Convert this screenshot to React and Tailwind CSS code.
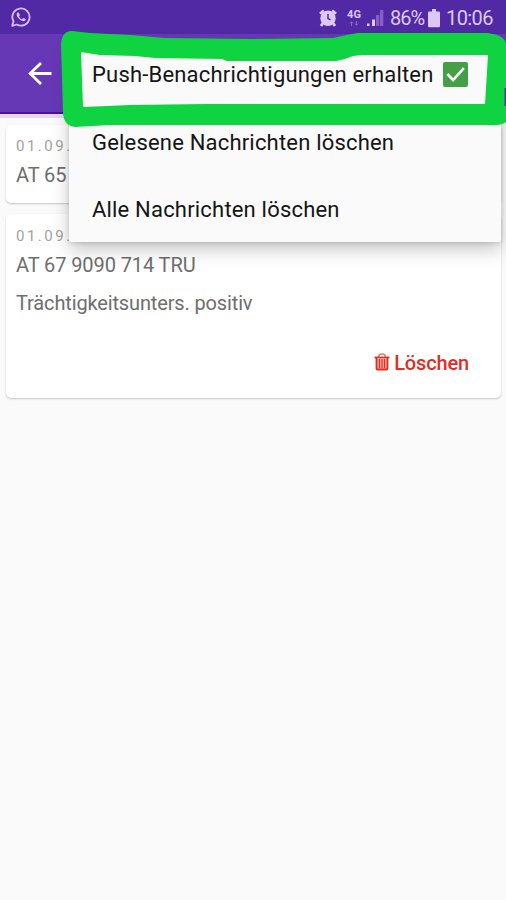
function WhatsAppIcon() {
  return (
    <svg className="mt-[7px] h-5 w-5" viewBox="0 0 20 20" fill="none">
      <path d="M1.2 18.8 2.5 14.3A8.6 8.6 0 1 1 5.7 17.5Z" stroke="#e0b8f4" strokeWidth="1.8" strokeLinejoin="round" />
      <path d="M7.1 5.2c-.6 0-1.5.8-1.5 2.1 0 3.1 4.2 6.9 7 6.9 1.200 0 2.200-.9 2.200-1.700 0-.5-2-1.500-2.400-1.500-.5 0-.9 1.200-1.400 1.200-.7 0-2.900-1.900-2.900-2.700 0-.4.7-.8.7-1.300 0-.5-.7-3-1.700-3Z" fill="#e0b8f4" />
    </svg>
  );
}

function AlarmIcon() {
  return (
    <svg className="h-[18px] w-[18px]" viewBox="0 0 18 18" fill="none">
      <path d="M1 4.800 4.800 1.500M13.200 1.500 17 4.800M4 14 2 17M14 14 16 17" stroke="#dcc9f3" strokeWidth="2.800" />
      <circle cx="9" cy="9.200" r="7.700" fill="#dcc9f3" />
      <path d="M9 5V9.600L11.500 10.800" stroke="#5229a5" strokeWidth="1.500" />
    </svg>
  );
}

function SignalIcon() {
  return (
    <svg className="h-[18px] w-[17px]" viewBox="0 0 17 18">
      <path d="M0 14.500h2.500v2.500H0ZM5 10.500h3V17H5Z" fill="#dcc9f3" />
      <path d="M9 6h3.300v11H9ZM13 1h3.300v16H13Z" fill="#8560c2" />
    </svg>
  );
}

function StatusBar() {
  return (
    <header className="flex h-[34px] bg-[#5229a5] pl-[11px] text-[#dcc9f3]">
      <WhatsAppIcon />
      <div className="ml-auto flex h-[36px] w-[187px] shrink-0 items-center">
        <AlarmIcon />
        <div className="ml-[9px] flex w-[16px] flex-col items-center text-[11px] leading-[10px] font-bold">
          <span>4G</span>
          <svg className="mt-[1px] h-[5px] w-[10px]" viewBox="0 0 10 5" fill="none" stroke="#8d6ac6">
            <path d="M2.500 5V.8M1 2.300 2.500.8 4 2.300M7.500 0v4.200M6 2.700 7.500 4.200 9 2.700" />
          </svg>
        </div>
        <div className="ml-[5px]"><SignalIcon /></div>
        <span className="ml-[6px] w-[38px] text-[20px] tracking-[-1px]">86%</span>
        <svg className="ml-0 h-[19px] w-[12px]" viewBox="0 0 12 19">
          <path d="M4 0h4v2.500h3q1 0 1 1V17q0 1.200-1 1.200H1Q0 18.200 0 17V3.500q0-1 1-1h3Z" fill="#dcc9f3" />
        </svg>
        <span className="ml-[6px] text-[20px] tracking-[-0.600px]">10:06</span>
      </div>
    </header>
  );
}

function Checkbox() {
  return (
    <svg className="ml-[10px] h-[25px] w-[25px] shrink-0" viewBox="0 0 25 25" fill="none">
      <rect width="25" height="25" rx="2" fill="#43a047" />
      <path d="m4.300 12 5.800 6L20.800 6.200" stroke="white" strokeWidth="2.600" />
    </svg>
  );
}

function Menu() {
  return (
    <div className="absolute top-[41px] left-[69px] flex h-[201px] w-[432px] flex-col rounded-[2px] bg-[#fafafa] pl-[23px] text-[22px] tracking-[0.190px] text-[#151515] shadow-[0_8px_18px_rgba(0,0,0,0.22),0_1px_4px_rgba(0,0,0,0.14)]">
      <div className="flex h-[67px] shrink-0 items-center whitespace-nowrap">
        <span className="w-[341px]">Push-Benachrichtigungen erhalten</span>
        <Checkbox />
      </div>
      <div className="flex h-[67px] shrink-0 items-center pt-[2px]">Gelesene Nachrichten löschen</div>
      <div className="flex h-[67px] shrink-0 items-center pt-[2px]">Alle Nachrichten löschen</div>
    </div>
  );
}

function Highlight() {
  return (
    <svg className="absolute top-0 left-0 h-[130px] w-[506px]" viewBox="0 0 506 130">
      <path
        fillRule="evenodd"
        fill="#10d342"
        d="M61 44Q62 31 72 31L90 33 130 35 165 38 253 39 333 38Q345 35 358 33L487 33Q506 35 506 45V122Q500 126 490 125L250 125 110 125 75 127Q64 126 63 113ZM81 52 100 55 135 56 155 58 222 59 227 61 336 61Q344 60 353 56L362 55 488 55 485 104 205 104 130 105 83 107Z"
      />
      <path d="M504.500 88h1.500v18h-1.500Z" fill="#4b3aa0" />
    </svg>
  );
}

function TrashIcon() {
  return (
    <svg className="mb-[3px] h-[18px] w-[16px]" viewBox="0 0 16 18" fill="none" stroke="#dc3025">
      <path d="M4.500 4 5.500 1.500Q6 1 8 1T10.500 1.500L11.500 4" strokeWidth="1.500" stroke="#e8756d" />
      <path d="M.5 4.500h15" strokeWidth="1.800" />
      <path d="M2.500 5v10.500Q2.500 16.500 3.500 16.500h9q1 0 1-1V5" strokeWidth="1.800" fill="#f3a29b" />
      <path d="M5.500 6v9M8 6v9M10.500 6v9" strokeWidth="1.100" />
    </svg>
  );
}

export default function App() {
  return (
    <div className="relative flex h-[900px] w-[506px] flex-col overflow-hidden bg-[#fafafa] font-['Roboto',sans-serif]">
      <StatusBar />
      <div className="flex h-[80px] shrink-0 items-center border-b-2 border-[#4c0fa6] bg-[#6738b6] pl-[28px]">
        <svg className="h-[24px] w-[24px]" viewBox="0 0 24 24" fill="none" stroke="white" strokeWidth="2.800">
          <path d="M23.500 12.500H2M13 2 2.200 12.500 13 23" />
        </svg>
      </div>
      <div className="h-[4px] shrink-0 bg-[#e2d9f0]" />
      <main className="flex flex-col gap-[11px] pr-[5px] pl-[6px] pt-[7px] text-[20px] text-[#6e6e6e]">
        <article className="h-[78px] rounded-[5px] bg-white px-[10px] pt-[10px] shadow-[0_1px_2px_rgba(0,0,0,0.22)]">
          <div className="text-[15px] leading-[22px] tracking-[2.500px] text-[#a2a2a2]">01.09.</div>
          <div className="mt-[5px] leading-[26px] tracking-[-0.100px]">AT 65</div>
        </article>
        <article className="flex h-[184px] flex-col rounded-[5px] bg-white px-[10px] pt-[11px] shadow-[0_1px_2px_rgba(0,0,0,0.22)]">
          <div className="text-[15px] leading-[22px] tracking-[2.500px] text-[#a2a2a2]">01.09.</div>
          <div className="mt-[5px] leading-[26px] tracking-[-0.090px]">AT 67 9090 714 TRU</div>
          <div className="mt-[12px] leading-[26px] tracking-[-0.140px]">Trächtigkeitsunters. positiv</div>
          <div className="mt-[34px] mr-[22px] flex items-center justify-end gap-[4px] leading-[26px] font-medium tracking-[-0.150px] text-[#dc3025]">
            <TrashIcon />
            <span>Löschen</span>
          </div>
        </article>
      </main>
      <Menu />
      <Highlight />
    </div>
  );
}
